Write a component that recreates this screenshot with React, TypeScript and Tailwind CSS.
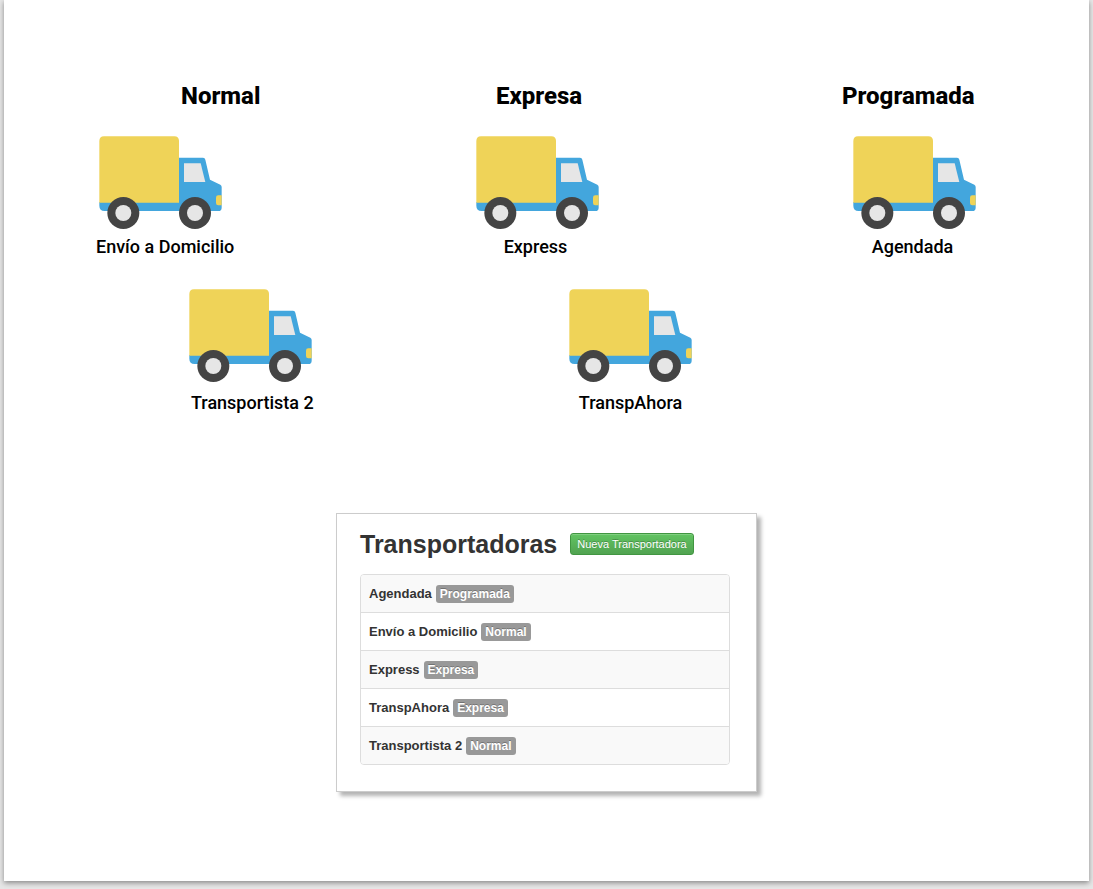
type Carrier = { name: string; type: string };

const carriers: Carrier[] = [
  { name: "Agendada", type: "Programada" },
  { name: "Envío a Domicilio", type: "Normal" },
  { name: "Express", type: "Expresa" },
  { name: "TranspAhora", type: "Expresa" },
  { name: "Transportista 2", type: "Normal" },
];

function Truck({ className = "" }: { className?: string }) {
  return (
    <svg viewBox="57 197 369 279" className={`h-[93px] w-[123px] shrink-0 ${className}`} aria-hidden="true">
      <path
        fill="#43a6dd"
        d="M58 395H297V262H369Q375 262 376 268L390 328L421 343Q425 345 425 350V412Q425 422 415 422H74Q58 422 58 406Z"
      />
      <path fill="#efd358" d="M58 397V212Q58 198 72 198H283Q297 198 297 212V397Z" />
      <path fill="#e6e6e6" d="M312 279H362L376 335H312Z" />
      <path fill="#efd358" d="M425 375H415Q408 375 408 382V398Q408 405 415 405H425Z" />
      <circle cx="130" cy="428" r="48" fill="#444" />
      <circle cx="130" cy="428" r="24" fill="#e6e6e6" />
      <circle cx="345" cy="428" r="48" fill="#444" />
      <circle cx="345" cy="428" r="24" fill="#e6e6e6" />
    </svg>
  );
}

function Shipment({
  name,
  className = "",
  truckClass = "",
  labelClass = "mt-[6px]",
}: {
  name: string;
  className?: string;
  truckClass?: string;
  labelClass?: string;
}) {
  return (
    <figure className={`flex w-fit flex-col items-center ${className}`}>
      <Truck className={truckClass} />
      <figcaption className={`text-[18px] leading-6 font-medium whitespace-nowrap ${labelClass}`}>{name}</figcaption>
    </figure>
  );
}

const headingClass = "mb-6 text-[24px] leading-8 font-extrabold whitespace-nowrap";

export default function App() {
  return (
    <div className="min-h-screen bg-[#e6e6e6] px-1 pb-2 font-['Roboto',sans-serif] text-black">
      <main className="bg-white pt-20 pb-[89px] shadow-[0_2px_5px_rgba(0,0,0,0.4)]">
        <div className="mx-auto flex max-w-[1085px] items-start justify-between pr-[113px] pl-[92px]">
          <section className="w-[218px]">
            <h2 className={`${headingClass} pl-[85px]`}>Normal</h2>
            <Shipment name="Envío a Domicilio" truckClass="mr-[10px]" />
            <Shipment name="Transportista 2" className="mt-[30px] ml-[91px]" labelClass="mt-[9px] pl-1" />
          </section>
          <section className="w-[228px] pl-3">
            <h2 className={`${headingClass} pl-5`}>Expresa</h2>
            <Shipment name="Express" labelClass="mt-[6px] pr-1" />
            <Shipment name="TranspAhora" className="mt-[30px] ml-[93px]" labelClass="mt-[9px]" />
          </section>
          <section className="w-[134px]">
            <h2 className={headingClass}>Programada</h2>
            <Shipment name="Agendada" className="ml-auto" labelClass="mt-[6px] pr-1" />
          </section>
        </div>

        <section className="mx-auto mt-[98px] w-[421px] max-w-full border border-[#ccc] bg-white pt-[15px] pr-[26px] pb-[26px] pl-[23px] font-['Liberation_Sans',Arial,sans-serif] text-[#333] shadow-[4px_4px_4px_rgba(0,0,0,0.3)]">
          <header className="mb-[15px] flex items-center gap-[13px]">
            <h1 className="text-[25px] leading-[30px] font-bold">Transportadoras</h1>
            <button
              type="button"
              className="h-[22px] rounded-[3px] border border-[#419641] bg-linear-to-b from-[#62c462] to-[#51a351] px-[6px] text-[11px] leading-5 whitespace-nowrap text-white shadow-[inset_0_1px_0_rgba(255,255,255,0.2)] [text-shadow:0_-1px_0_rgba(0,0,0,0.25)]"
            >
              Nueva Transportadora
            </button>
          </header>
          <table
            aria-label="Transportadoras"
            className="w-full border-separate border-spacing-0 overflow-hidden rounded-[4px] border border-[#ddd] text-[13px] leading-[18px] font-bold"
          >
            <tbody>
              {carriers.map((carrier) => (
                <tr key={carrier.name} className="group odd:bg-[#f9f9f9]">
                  <td className="h-[38px] border-t border-[#ddd] px-2 group-first:h-[37px] group-first:border-t-0">
                    <div className="flex items-center gap-1">
                      <span>{carrier.name}</span>
                      <span className="h-[18px] rounded-[3px] bg-[#999] px-1 text-[12px] leading-[18px] text-white [text-shadow:0_-1px_0_rgba(0,0,0,0.25)]">
                        {carrier.type}
                      </span>
                    </div>
                  </td>
                </tr>
              ))}
            </tbody>
          </table>
        </section>
      </main>
    </div>
  );
}
